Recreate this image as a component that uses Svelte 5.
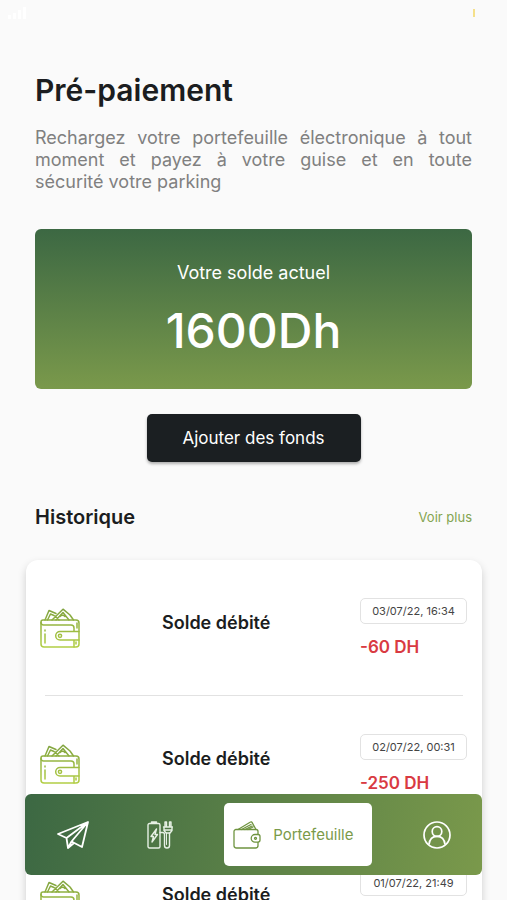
<script lang="ts">
  interface Transaction {
    label: string
    date: string
    amount: string
  }

  const balance = '1600Dh'

  const transactions: Transaction[] = [
    { label: 'Solde débité', date: '03/07/22, 16:34', amount: '-60 DH' },
    { label: 'Solde débité', date: '02/07/22, 00:31', amount: '-250 DH' },
    { label: 'Solde débité', date: '01/07/22, 21:49', amount: '-60 DH' },
  ]
</script>

<div class="screen">
  <div class="status-bar" aria-hidden="true">
    <svg width="20" height="12" viewBox="0 0 20 12" fill="#fff">
      <path d="M0 8h3v4H0zM5 6h3v6H5zM10 3h3v9h-3zM15 0h3v12h-3z" />
    </svg>
    <span class="battery"></span>
  </div>

  <main>
    <header>
      <h1>Pré-paiement</h1>
      <p>
        Rechargez votre portefeuille électronique à tout moment et payez à votre
        guise et en toute sécurité&nbsp;votre parking
      </p>
    </header>

    <section class="balance">
      <span class="balance-label">Votre solde actuel</span>
      <strong>{balance}</strong>
    </section>

    <button class="add-funds">Ajouter des fonds</button>

    <div class="history-head">
      <h2>Historique</h2>
      <a href="#historique">Voir plus</a>
    </div>
  </main>

  <ul class="history" id="historique">
    {#each transactions as transaction}
      <li>
        <svg class="wallet" viewBox="0 0 40 40" aria-hidden="true">
          <defs>
            <linearGradient id="lime" x1="0" y1="0" x2="0" y2="40" gradientUnits="userSpaceOnUse">
              <stop offset="0" stop-color="#7fa23f" />
              <stop offset="1" stop-color="#b3cf45" />
            </linearGradient>
          </defs>
          <g fill="none" stroke="url(#lime)" stroke-width="1.5" stroke-linejoin="round" stroke-linecap="round">
            <path d="M5 12 9 2.500 16 5.500M7.500 12l3-6 3.500 1.500M12 12 23 1.200 30 7l3.500 5M16 12l7-7.500 6 7.500M15 8l4 4M20 8.500a3 3 0 0 1 5 0" />
            <path d="M3 12h33a3 3 0 0 1 3 3v21a3 3 0 0 1-3 3H4a3 3 0 0 1-3-3V14a2 2 0 0 1 2-2Z" />
            <path d="M1 14.500a2.500 2.500 0 0 0 2.500 2.500H31a3 3 0 0 1 3 3v3M34 32v7M39 23.500H20a4.300 4.300 0 0 0 0 8.600h19" />
            <path d="M5 26v9M5 22v1M37 15v5M36 34v2" />
            <circle cx="20" cy="27.800" r="1.600" />
          </g>
        </svg>
        <span class="label">{transaction.label}</span>
        <div class="details">
          <time>{transaction.date}</time>
          <span class="amount">{transaction.amount}</span>
        </div>
      </li>
    {/each}
  </ul>

  <nav aria-label="Navigation principale">
    <button class="tab" aria-label="Explorer">
      <svg width="32" height="28" viewBox="0 0 32 28" fill="none" stroke="#fff" stroke-width="1.8" stroke-linejoin="round">
        <path d="M31 1 1 13l8.500 4L31 1 25 26l-10.500-5.500L31 1M9.500 17l1.500 10 3.500-6.500M11 27l6-5" />
      </svg>
    </button>

    <button class="tab" aria-label="Recharge">
      <svg width="26" height="28" viewBox="0 0 26 28" fill="none" stroke="#e6f0e4" stroke-width="1.400" stroke-linejoin="round" stroke-linecap="round">
        <path d="M2.500 2.500h9A1.500 1.500 0 0 1 13 4v21.500a1.500 1.500 0 0 1-1.500 1.500h-9A1.500 1.500 0 0 1 1 25.500V4a1.500 1.500 0 0 1 1.500-1.500ZM4.500 2.500V1h5v1.500" />
        <path d="M9.500 8 4 15.500h2.500L5 21l5.500-7.500H8Z" />
        <path d="M16.500 6h9M17 6v3.500l2 2.500h4l2-2.500V6M18 6V1h1.500v5M22.500 6V1H24v5M17 9h8" />
        <path d="M13 11.500h2.500c1.500 0 2 1 2 2v11a2.500 2.500 0 0 0 5 0V12" />
        <path d="M19.500 12v11.500" stroke-width="1" />
      </svg>
    </button>

    <button class="tab active" aria-current="page">
      <svg width="28" height="28" viewBox="0 0 28 28" fill="none" stroke="#6f9440" stroke-width="1.300" stroke-linejoin="round" stroke-linecap="round">
        <path d="M3 8.500h20a2 2 0 0 1 2 2v14a2.500 2.500 0 0 1-2.500 2.500h-19A2.500 2.500 0 0 1 1 24.500v-14a2 2 0 0 1 2-2Z" />
        <path d="M25 13.500h-3a3.800 3.800 0 0 0 0 7.600h3a2 2 0 0 0 2-2v-3.600a2 2 0 0 0-2-2Z" fill="#fff" />
        <circle cx="22.500" cy="17.300" r="1" />
        <path d="M5 8.500 17.500 1a1 1 0 0 1 1.500.4L23 8.500M8.500 8.500l9.500-5M12 8.500l7-3.500M15 8.500l5-2.500" />
      </svg>
      Portefeuille
    </button>

    <button class="tab" aria-label="Profil">
      <svg width="28" height="28" viewBox="0 0 28 28" fill="none" stroke="#fff" stroke-width="1.700">
        <circle cx="14" cy="14" r="13" />
        <circle cx="14" cy="10.500" r="4.800" />
        <path d="M6 23.500c.5-5 3.500-8.200 8-8.200s7.500 3.200 8 8.200" />
      </svg>
    </button>
  </nav>
</div>

<style>
  :global(body) {
    margin: 0;
    background: #fafafa;
  }

  .screen {
    height: 100vh;
    overflow: hidden;
    color: #1b1d20;
    font-family: Inter, 'Liberation Sans', sans-serif;
  }

  .status-bar {
    display: flex;
    justify-content: space-between;
    align-items: center;
    height: 26px;
    padding: 0 32px 0 8px;
  }

  .battery {
    width: 2px;
    height: 8px;
    background: #f5e08a;
  }

  main {
    display: flex;
    flex-direction: column;
    padding: 44px 35px 0;
  }

  h1,
  h2,
  p {
    margin: 0;
  }

  h1 {
    font-size: 30px;
    font-weight: 600;
    line-height: 40px;
  }

  p {
    margin-top: 17px;
    color: #808080;
    font-size: 18px;
    line-height: 22px;
    text-align: justify;
  }

  .balance {
    display: flex;
    flex-direction: column;
    align-items: center;
    gap: 16px;
    margin-top: 36px;
    padding: 32px 16px 28px;
    border-radius: 6px;
    background: linear-gradient(#3c6843, #7a994b);
    color: #fff;
  }

  .balance-label {
    font-size: 18px;
    line-height: 24px;
  }

  .balance strong {
    font-size: 48px;
    font-weight: 500;
    line-height: 60px;
  }

  .add-funds {
    align-self: center;
    width: 214px;
    height: 48px;
    margin-top: 25px;
    border: 0;
    border-radius: 5px;
    background: #1b1f22;
    box-shadow: 0 2px 3px rgb(0 0 0 / 30%);
    color: #fff;
    font: inherit;
    font-size: 17px;
    cursor: pointer;
  }

  .history-head {
    display: flex;
    justify-content: space-between;
    align-items: center;
    margin-top: 42px;
  }

  h2 {
    font-size: 20px;
    font-weight: 600;
    line-height: 26px;
  }

  .history-head a {
    color: #83a450;
    font-size: 13px;
    text-decoration: none;
  }

  .history {
    margin: 30px 25px 0 26px;
    padding: 0;
    border-radius: 12px;
    background: #fff;
    box-shadow: 0 4px 8px rgb(0 0 0 / 18%);
    list-style: none;
  }

  li {
    display: grid;
    grid-template-columns: 122px 1fr 107px;
    align-items: center;
    height: 136px;
    padding: 0 15px 0 14px;
    position: relative;
    box-sizing: border-box;
  }

  li:not(:last-child)::after {
    content: '';
    position: absolute;
    right: 19px;
    bottom: 0;
    left: 19px;
    height: 1px;
    background: #e2e2e2;
  }

  .wallet {
    width: 40px;
    height: 40px;
  }

  .label {
    padding-bottom: 10px;
    font-size: 18px;
    font-weight: 600;
    line-height: 24px;
  }

  .details {
    display: flex;
    flex-direction: column;
    gap: 12px;
  }

  time {
    border: 1px solid #e2e2e2;
    border-radius: 5px;
    color: #444;
    font-size: 11px;
    line-height: 24px;
    text-align: center;
  }

  .amount {
    color: #d93a42;
    font-size: 17px;
    font-weight: 600;
    line-height: 22px;
  }

  nav {
    position: fixed;
    right: 25px;
    bottom: 25px;
    left: 25px;
    display: flex;
    justify-content: space-between;
    align-items: center;
    height: 81px;
    padding: 0 23px 0 26px;
    box-sizing: border-box;
    border-radius: 6px;
    background: linear-gradient(100deg, #3c6843, #7a994b);
  }

  .tab {
    display: flex;
    justify-content: center;
    align-items: center;
    width: 44px;
    height: 63px;
    padding: 0;
    border: 0;
    border-radius: 5px;
    background: none;
    font: inherit;
    font-size: 15px;
    cursor: pointer;
  }

  .tab.active {
    gap: 12px;
    width: 148px;
    padding-right: 10px;
    background: #fff;
    color: #7a9a4a;
  }
</style>
